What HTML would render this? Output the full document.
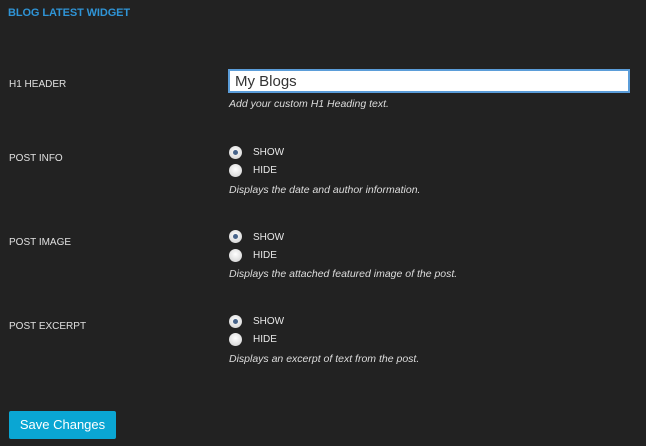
<!DOCTYPE html>
<html><head><style>
body{margin:0;width:646px;height:446px;background:#222;font-family:"Liberation Sans",sans-serif;position:relative;overflow:hidden}
.a{position:absolute;white-space:nowrap}
.t{left:8px;top:7px;color:#2f94d6;font-size:11px;font-weight:bold;letter-spacing:-0.1px}
.l{left:9px;color:#e0e0e0;font-size:10px}
.d{left:229px;color:#ddd;font-size:10.5px;font-style:italic}
.o{left:253px;color:#e8e8e8;font-size:10px}
.r{left:229px;width:13px;height:13px;border-radius:50%;background:radial-gradient(circle at 50% 40%,#fff,#ccc)}
.r.on::after{content:"";position:absolute;left:4px;top:4px;width:5px;height:5px;border-radius:50%;background:#46638a}
</style></head><body>
<div class="a t">BLOG LATEST WIDGET</div>
<div class="a l" style="top:79px">H1 HEADER</div>
<div class="a" style="left:228px;top:69px;background:#fff;border:2px solid #5b9dd9;width:398px;height:20px"></div>
<div class="a" style="left:235px;top:73px;font-size:15px;color:#333">My Blogs</div>
<div class="a d" style="top:98px">Add your custom H1 Heading text.</div>

<div class="a l" style="top:153px">POST INFO</div>
<div class="a r on" style="top:146px"></div><div class="a o" style="top:147px">SHOW</div>
<div class="a r" style="top:164px"></div><div class="a o" style="top:165px">HIDE</div>
<div class="a d" style="top:184px">Displays the date and author information.</div>

<div class="a l" style="top:237px">POST IMAGE</div>
<div class="a r on" style="top:230px"></div><div class="a o" style="top:232px">SHOW</div>
<div class="a r" style="top:249px"></div><div class="a o" style="top:250px">HIDE</div>
<div class="a d" style="top:268px">Displays the attached featured image of the post.</div>

<div class="a l" style="top:321px">POST EXCERPT</div>
<div class="a r on" style="top:315px"></div><div class="a o" style="top:316px">SHOW</div>
<div class="a r" style="top:333px"></div><div class="a o" style="top:334px">HIDE</div>
<div class="a d" style="top:353px">Displays an excerpt of text from the post.</div>

<div class="a" style="left:9px;top:411px;width:107px;height:28px;background:#0aa6d3;border-radius:2px;color:#fff;font-size:13px;line-height:28px;text-align:center">Save Changes</div>
</body></html>
